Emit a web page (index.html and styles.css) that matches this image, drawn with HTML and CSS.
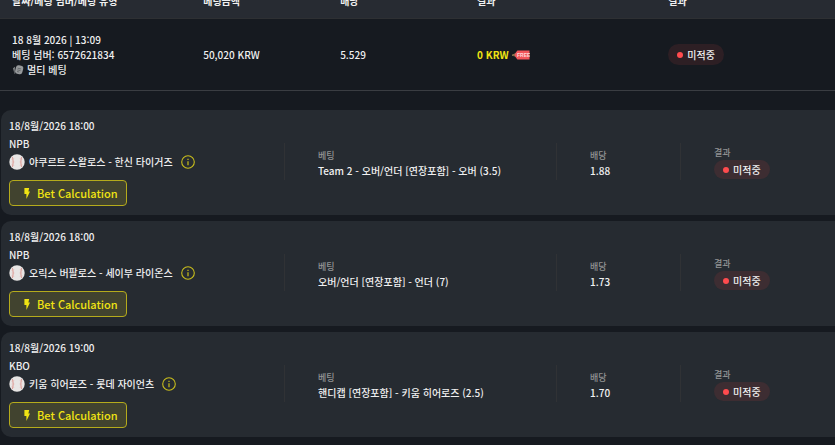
FILE: index.html
```html
<!DOCTYPE html>
<html lang="ko">
<head>
<meta charset="utf-8">
<title>베팅 내역</title>
<link rel="stylesheet" href="styles.css">
</head>
<body>
<svg class="sprite" aria-hidden="true">
  <symbol id="ball" viewBox="0 0 16 16">
    <circle cx="8" cy="8" r="7.7" fill="#e8e6e5"/>
    <path d="M3.4 3Q5.2 8 3.4 13M12.6 3Q10.8 8 12.6 13" fill="none" stroke="#dba09c" stroke-width="1.1"/>
    <path d="M2.6 5.4l2.6-.8M2.8 8h2.6M2.6 10.6l2.6.8M13.4 5.4l-2.6-.8M13.2 8h-2.6M13.4 10.6l-2.6.8" stroke="#e6b4b0" stroke-width=".7"/>
  </symbol>
  <symbol id="info" viewBox="0 0 14 14">
    <circle cx="7" cy="7" r="6.3" fill="none" stroke="currentColor" stroke-width="1.1"/>
    <path d="M7 6.2V10.2M7 3.8V5" stroke="currentColor" stroke-width="1.2"/>
  </symbol>
  <symbol id="bolt" viewBox="0 0 6 11">
    <path d="M.4 0H5.2L4.4 3.4H6L2.4 11V6H.4Z" fill="currentColor"/>
  </symbol>
</svg>
<main class="page">
  <table class="summary">
    <thead>
      <tr><th class="c-wide">날짜/베팅 넘버/베팅 유형</th><th class="c-narrow">베팅금액</th><th class="c-narrow">배당</th><th class="c-wide">결과</th><th>결과</th></tr>
    </thead>
    <tbody>
      <tr>
        <td>
          <div>18 8월 2026 | 13:09</div>
          <div>베팅 넘버: 6572621834</div>
          <div class="multi">
            <svg class="multi-icon" viewBox="0 0 12 12" aria-hidden="true">
              <path d="M1 4.2L3 2.8 2.6 8.4 3.4 10 2.4 9.6Z" fill="#85888a"/>
              <rect x="3.4" y="1.4" width="7.4" height="8.6" rx="2.6" transform="rotate(14 7 6)" fill="#96999b"/>
              <path d="M5.6 4.2l3.4.7M5.3 5.9l3.2.7M5 7.5l2.2.5" stroke="#5a5e61" stroke-width=".8"/>
            </svg>
            멀티 베팅
          </div>
        </td>
        <td>50,020 KRW</td>
        <td>5.529</td>
        <td>
          <div class="win"><strong>0 KRW</strong>
            <svg class="free" viewBox="0 0 18 10" role="img" aria-label="FREE">
              <path d="M5.4 .5H17.5V9.5H5.4L2 5Z" fill="#f2555a"/>
              <path d="M0 5.2L3.6 3.6M0 5.2L3.6 6.2" stroke="#a58a5a" stroke-width=".8" fill="none"/>
              <text x="5" y="7">FREE</text>
            </svg>
          </div>
        </td>
        <td><span class="pill pill-lg">미적중</span></td>
      </tr>
    </tbody>
  </table>

  <section class="bets">
    <article class="card">
      <div class="event">
        <div>18/8월/2026 18:00</div>
        <div>NPB</div>
        <div class="teams"><svg class="ball" aria-hidden="true"><use href="#ball"/></svg>야쿠르트 스왈로스 - 한신 타이거즈<svg class="info" aria-hidden="true"><use href="#info"/></svg></div>
        <button class="calc" type="button"><svg class="bolt" aria-hidden="true"><use href="#bolt"/></svg>Bet Calculation</button>
      </div>
      <div class="cell"><span class="label">베팅</span><span>Team 2 - 오버/언더 [연장포함] - 오버 (3.5)</span></div>
      <div class="cell"><span class="label">배당</span><span>1.88</span></div>
      <div class="cell"><span class="label">결과</span><span class="pill">미적중</span></div>
    </article>
    <article class="card">
      <div class="event">
        <div>18/8월/2026 18:00</div>
        <div>NPB</div>
        <div class="teams"><svg class="ball" aria-hidden="true"><use href="#ball"/></svg>오릭스 버팔로스 - 세이부 라이온스<svg class="info" aria-hidden="true"><use href="#info"/></svg></div>
        <button class="calc" type="button"><svg class="bolt" aria-hidden="true"><use href="#bolt"/></svg>Bet Calculation</button>
      </div>
      <div class="cell"><span class="label">베팅</span><span>오버/언더 [연장포함] - 언더 (7)</span></div>
      <div class="cell"><span class="label">배당</span><span>1.73</span></div>
      <div class="cell"><span class="label">결과</span><span class="pill">미적중</span></div>
    </article>
    <article class="card">
      <div class="event">
        <div>18/8월/2026 19:00</div>
        <div>KBO</div>
        <div class="teams"><svg class="ball" aria-hidden="true"><use href="#ball"/></svg>키움 히어로즈 - 롯데 자이언츠<svg class="info" aria-hidden="true"><use href="#info"/></svg></div>
        <button class="calc" type="button"><svg class="bolt" aria-hidden="true"><use href="#bolt"/></svg>Bet Calculation</button>
      </div>
      <div class="cell"><span class="label">베팅</span><span>핸디캡 [연장포함] - 키움 히어로즈 (2.5)</span></div>
      <div class="cell"><span class="label">배당</span><span>1.70</span></div>
      <div class="cell"><span class="label">결과</span><span class="pill">미적중</span></div>
    </article>
  </section>
</main>
</body>
</html>
```
FILE: styles.css
```css
* { box-sizing: border-box; }

body {
  margin: 0;
  background: #161a20;
  color: #f0f0f0;
  font: 500 10px/15px "Noto Sans CJK KR", sans-serif;
  overflow: hidden;
}

.sprite { display: none; }
svg { flex: none; }

/* The header row is scrolled half out of view. */
.page { margin-top: -18px; }

.summary {
  width: 100%;
  table-layout: fixed;
  border-collapse: separate;
  border-spacing: 0;
}
.summary th,
.summary td {
  padding: 0 0 0 12px;
  text-align: left;
  vertical-align: middle;
}
.summary th {
  height: 37px;
  background: #272b32;
  border-bottom: 1px solid #2e3033;
  font-weight: 700;
}
.summary td {
  height: 72px;
  border-bottom: 1px solid #3a3d42;
}
.c-wide { width: 22.9%; }
.c-narrow { width: 16.4%; }

.multi, .win, .teams { display: flex; align-items: center; }
.multi { gap: 3px; }
.multi-icon { width: 12px; height: 12px; }
.win { gap: 3px; color: #f0e313; }
.free { width: 18px; height: 10px; }
.free text { font: 700 5px "Liberation Sans", sans-serif; fill: #ffd9da; }

.pill {
  display: inline-flex;
  align-items: center;
  gap: 4px;
  height: 19px;
  padding: 0 9px;
  border-radius: 11px;
  background: #3d2d32;
}
.pill::before {
  content: "";
  width: 6px;
  height: 6px;
  border-radius: 50%;
  background: #ff4b4e;
}
.pill-lg { height: 21px; background: #2d1f24; }

.bets {
  display: flex;
  flex-direction: column;
  gap: 6px;
  padding: 19px 0 0 1px;
}
.card {
  display: grid;
  grid-template-columns: 275fr 272fr 124fr 155fr;
  align-items: center;
  padding: 7px 0 9px 8px;
  border-radius: 10px 0 0 10px;
  background: #262b31;
}
.event { line-height: 18px; }
.teams { gap: 4px; line-height: 17px; }
.ball { width: 16px; height: 16px; }
.info { width: 14px; height: 14px; margin-left: 4px; color: #c9be1c; }

.calc {
  display: flex;
  align-items: center;
  gap: 7px;
  height: 26px;
  margin: 10px 0 0;
  padding: 0 8px 0 14px;
  border: 1px solid #b5ab1c;
  border-radius: 4px;
  background: #41432f;
  color: #f0e313;
  font: 500 11px/15px "Noto Sans CJK KR", sans-serif;
}
.bolt { width: 6px; height: 11px; }

.cell {
  display: flex;
  flex-direction: column;
  align-items: flex-start;
  justify-content: flex-end;
  height: 37px;
  padding: 0 0 1px 33px;
  border-left: 1px solid #303235;
  line-height: 16px;
}
.label { color: #929394; font-size: 9px; line-height: 14px; }
```
